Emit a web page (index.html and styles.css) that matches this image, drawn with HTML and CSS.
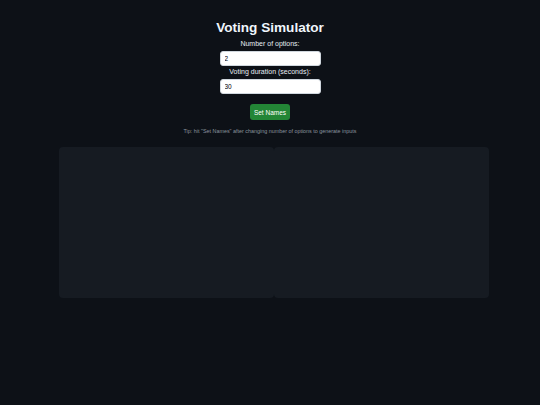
FILE: index.html
```html
<!DOCTYPE html>
<html lang="en">
<head>
<meta charset="utf-8">
<title>Voting Simulator</title>
<link rel="stylesheet" href="styles.css">
</head>
<body>
<main class="app">
  <h1 class="title">Voting Simulator</h1>
  <label class="field-label" for="num">Number of options:</label>
  <input class="field" id="num" type="number" value="2">
  <label class="field-label second" for="dur">Voting duration (seconds):</label>
  <input class="field" id="dur" type="number" value="30">
  <button class="btn" type="button">Set Names</button>
  <p class="tip">Tip: hit "Set Names" after changing number of options to generate inputs</p>
  <section class="panels">
    <div class="panel"></div>
    <div class="panel"></div>
  </section>
</main>
</body>
</html>
```

FILE: styles.css
```css
* { box-sizing: border-box; }
html, body {
  margin: 0;
  background: #0d1117;
  color: #e6edf3;
  font-family: "Liberation Sans", Arial, sans-serif;
}
.app {
  display: flex;
  flex-direction: column;
  align-items: center;
  padding-top: 20px;
}
.title {
  margin: 0 0 4px;
  font-size: 13.6px;
  line-height: 16px;
  font-weight: bold;
  color: #f0f6fc;
}
.field-label {
  display: block;
  font-size: 7px;
  line-height: 8px;
  color: #e6edf3;
  margin-bottom: 3px;
}
.field-label.second { margin-top: 2px; }
.field {
  width: 101px;
  height: 15px;
  margin: 0;
  padding: 0 4px;
  border: 1px solid #d0d7de;
  border-radius: 3px;
  background: #ffffff;
  color: #000;
  font-family: "Liberation Sans", Arial, sans-serif;
  font-size: 6.5px;
  -moz-appearance: textfield;
}
.field::-webkit-inner-spin-button,
.field::-webkit-outer-spin-button { -webkit-appearance: none; margin: 0; }
.btn {
  margin-top: 10px;
  height: 16px;
  padding: 0 4px;
  border: none;
  border-radius: 3px;
  background: #238636;
  color: #ffffff;
  font-family: "Liberation Sans", Arial, sans-serif;
  font-size: 6.5px;
}
.tip {
  margin: 7.5px 0 0;
  font-size: 5.4px;
  line-height: 7px;
  color: #8b949e;
}
.panels {
  display: flex;
  align-self: flex-start;
  margin-left: 59px;
  margin-top: 12.5px;
  width: 430px;
}
.panel {
  flex: 1;
  height: 151px;
  background: #161b22;
  border-radius: 4px;
}
```
